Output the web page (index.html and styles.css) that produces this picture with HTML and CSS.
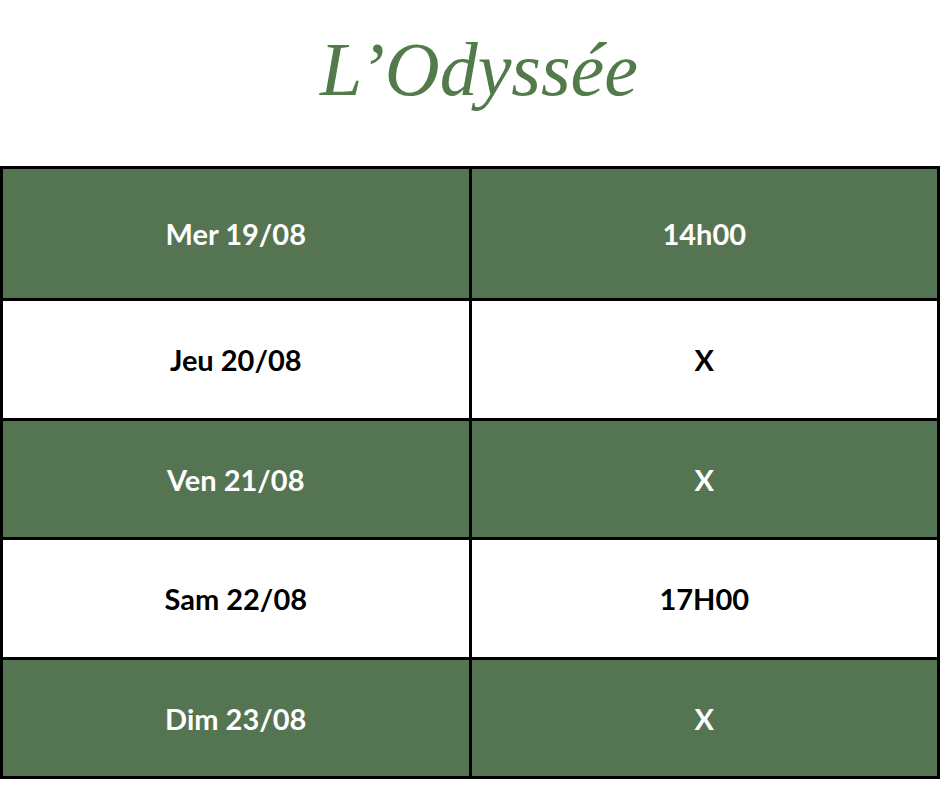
FILE: index.html
```html
<!DOCTYPE html>
<html lang="fr">
<head>
<meta charset="utf-8">
<title>L’Odyssée</title>
<link rel="stylesheet" href="styles.css">
</head>
<body>
<header class="header">
  <h1 class="title">L’Odyssée</h1>
</header>
<main class="schedule">
  <div class="cell green">Mer 19/08</div>
  <div class="cell green">14h00</div>
  <div class="cell white">Jeu 20/08</div>
  <div class="cell white">X</div>
  <div class="cell green">Ven 21/08</div>
  <div class="cell green">X</div>
  <div class="cell white">Sam 22/08</div>
  <div class="cell white">17H00</div>
  <div class="cell green">Dim 23/08</div>
  <div class="cell green">X</div>
</main>
</body>
</html>
```

FILE: styles.css
```css
html, body {
  margin: 0;
  padding: 0;
  background: #ffffff;
}

body {
  width: 940px;
  height: 788px;
  overflow: hidden;
}

.header {
  height: 166px;
  display: flex;
  align-items: center;
  justify-content: center;
}

.title {
  margin: 0 0 28px 18px;
  font-family: "Liberation Serif", "DejaVu Serif", serif;
  font-style: italic;
  font-weight: normal;
  font-size: 76px;
  line-height: 1;
  color: #527a4b;
  letter-spacing: 0;
}

.schedule {
  display: grid;
  grid-template-columns: 1fr 1fr;
  grid-template-rows: 129px 117px 116px 117px 116px;
  gap: 3px;
  padding: 3px;
  background: #000000;
}

.cell {
  display: flex;
  align-items: center;
  justify-content: center;
  font-family: Lato, "Liberation Sans", sans-serif;
  font-weight: 700;
  font-size: 29px;
}

.green {
  background: #557451;
  color: #ffffff;
}

.white {
  background: #ffffff;
  color: #000000;
}
```
